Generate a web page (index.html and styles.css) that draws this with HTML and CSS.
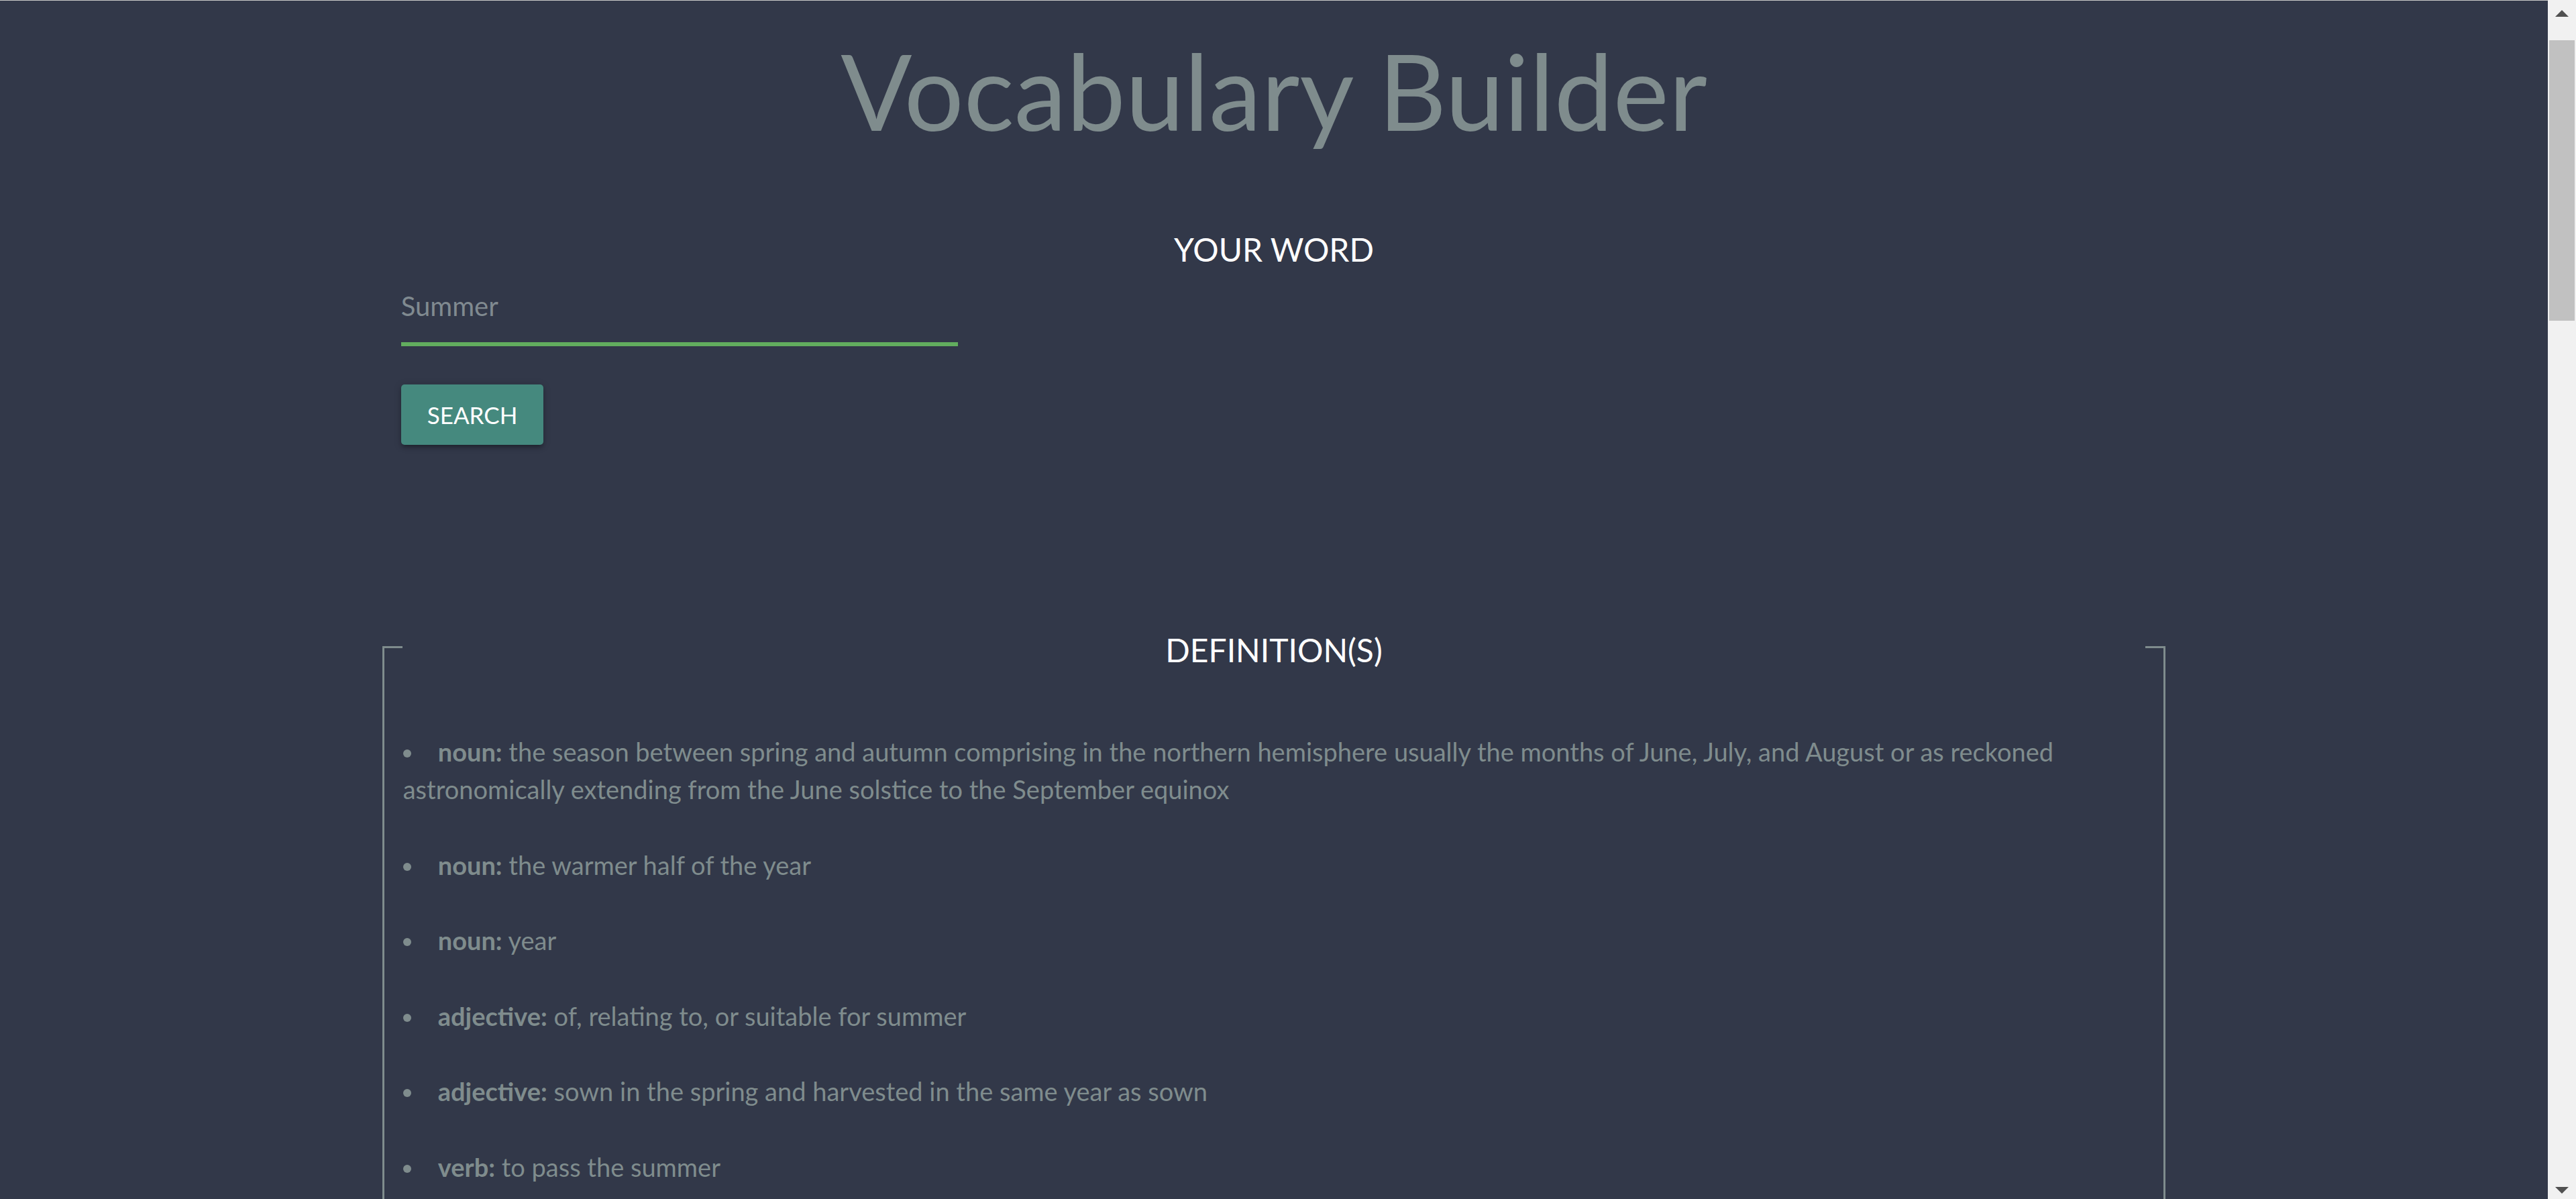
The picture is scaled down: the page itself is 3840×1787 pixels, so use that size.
FILE: index.html
```html
<!DOCTYPE html>
<html lang="en">
<head>
<meta charset="utf-8">
<title>Vocabulary Builder</title>
<link rel="stylesheet" href="styles.css">
</head>
<body>
<div class="page">
  <header class="page-header">
    <h1 class="title">Vocabulary Builder</h1>
  </header>
  <main class="container">
    <section class="search">
      <h2 class="section-title">YOUR WORD</h2>
      <div class="row">
        <div class="input-field">
          <input class="word-input" type="text" placeholder="Summer">
        </div>
      </div>
      <div class="row">
        <button class="btn" type="button">SEARCH</button>
      </div>
    </section>
    <section class="defs">
      <h2 class="section-title defs-title">DEFINITION(S)</h2>
      <ul class="def-list">
        <li><strong>noun:</strong> the season between spring and autumn comprising in the northern hemisphere usually the months of June, July, and August or as reckoned astronomically extending from the June solstice to the September equinox</li>
        <li><strong>noun:</strong> the warmer half of the year</li>
        <li><strong>noun:</strong> year</li>
        <li><strong>adjective:</strong> of, relating to, or suitable for summer</li>
        <li><strong>adjective:</strong> sown in the spring and harvested in the same year as sown</li>
        <li><strong>verb:</strong> to pass the summer</li>
      </ul>
    </section>
  </main>
</div>
<div class="scrollbar" aria-hidden="true">
  <div class="sb-btn sb-up"><span class="arrow-up"></span></div>
  <div class="sb-thumb"></div>
  <div class="sb-track"></div>
  <div class="sb-btn sb-down"><span class="arrow-down"></span></div>
</div>
</body>
</html>
```
FILE: styles.css
```css
html {
  background: #323849;
  overflow: hidden;
}
body {
  margin: 0;
  border-top: 1px solid #c9c9c9;
  background: #323849;
  font-family: "Lato", "Open Sans", sans-serif;
  color: #7f8c8d;
}
.page {
  margin-right: 42px;
}
.page-header {
  text-align: center;
}
.title {
  margin: 37px 0 0;
  font-size: 157px;
  line-height: 192px;
  font-weight: 400;
  color: #7f8c8d;
}
.container {
  width: 70%;
  margin: 0 auto;
}
.section-title {
  margin: 0;
  text-align: center;
  font-size: 48px;
  line-height: 61px;
  font-weight: 400;
  color: #ffffff;
}
.search .section-title {
  margin-top: 111px;
}
.row {
  display: flex;
}
.input-field {
  width: 33.3333%;
  padding: 0 28px;
  box-sizing: border-box;
}
.word-input {
  display: block;
  width: 100%;
  height: 108px;
  box-sizing: content-box;
  padding: 0;
  margin: 0;
  border: none;
  border-bottom: 3px solid #62ad5e;
  box-shadow: 0 3px 0 0 #62ad5e;
  background: transparent;
  outline: none;
  font-family: inherit;
  font-size: 40px;
  color: #808a90;
}
.word-input::placeholder {
  color: #808a90;
}
.btn {
  margin: 60px 0 0 28px;
  height: 90px;
  padding: 0 39px;
  border: none;
  border-radius: 5px;
  background: #45897e;
  color: #ffffff;
  font-family: inherit;
  font-size: 35px;
  line-height: 90px;
  box-shadow: 0 5px 5px 0 rgba(0,0,0,0.14), 0 7px 2px -5px rgba(0,0,0,0.12), 0 2px 12px 0 rgba(0,0,0,0.2);
}
.defs {
  display: flow-root;
  position: relative;
  margin-top: 300px;
  margin-bottom: 40px;
  min-height: 6200px;
  padding: 0 28px;
  border-left: 3px solid #7f8c8d;
  border-right: 3px solid #7f8c8d;
}
.defs::before,
.defs::after {
  content: "";
  position: absolute;
  top: 0;
  width: 30px;
  height: 3px;
  background: #7f8c8d;
}
.defs::before {
  left: -3px;
}
.defs::after {
  right: -3px;
}
.defs-title {
  margin-top: -25px;
}
.def-list {
  list-style: none;
  margin: 93px 0 0;
  padding: 0;
}
.def-list li {
  font-size: 38px;
  line-height: 56.25px;
  margin-bottom: 56.25px;
}
.def-list li::before {
  content: "";
  display: inline-block;
  width: 12px;
  height: 12px;
  border-radius: 50%;
  background: #7f8c8d;
  margin-right: 40px;
  vertical-align: 6px;
}
.def-list strong {
  font-weight: 700;
}

/* window scrollbar drawn over the right edge */
.scrollbar {
  position: fixed;
  top: 0;
  right: 0;
  width: 42px;
  height: 100vh;
  display: flex;
  flex-direction: column;
  background: #f1f1f1;
}
.sb-btn {
  display: flex;
  justify-content: center;
}
.sb-up {
  height: 60px;
  align-items: flex-start;
}
.sb-down {
  height: 42px;
  align-items: flex-start;
}
.arrow-up {
  margin-top: 15px;
  width: 0;
  height: 0;
  border-left: 10px solid transparent;
  border-right: 10px solid transparent;
  border-bottom: 10px solid #505050;
}
.arrow-down {
  margin-top: 24px;
  width: 0;
  height: 0;
  border-left: 10px solid transparent;
  border-right: 10px solid transparent;
  border-top: 10px solid #505050;
}
.sb-thumb {
  height: 418px;
  margin: 0 2px 0 2px;
  background: #c1c1c1;
}
.sb-track {
  flex: 1;
}
```
